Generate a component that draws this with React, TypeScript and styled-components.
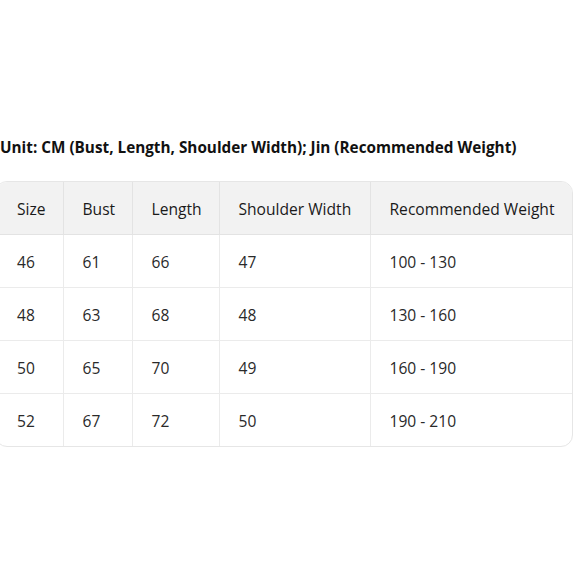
import { FC } from "react";
import styled, { createGlobalStyle } from "styled-components";

const Global = createGlobalStyle`
    html, body {
        margin: 0;
        padding: 0;
        background: #ffffff;
        font-family: "Open Sans", "Noto Sans", "Liberation Sans", sans-serif;
        overflow: hidden;
    }
`

const columns = [
    { title: "Size", width: 67 },
    { title: "Bust", width: 69 },
    { title: "Length", width: 87 },
    { title: "Shoulder Width", width: 151 },
    { title: "Recommended Weight", width: 203 },
]

const rows = [
    ["46", "61", "66", "47", "100 - 130"],
    ["48", "63", "68", "48", "130 - 160"],
    ["50", "65", "70", "49", "160 - 190"],
    ["52", "67", "72", "50", "190 - 210"],
]

const App: FC = () => {
    return <Page>
        <Global />
        <Title>Unit: CM (Bust, Length, Shoulder Width); Jin (Recommended Weight)</Title>
        <TableBox>
            <Table>
                <colgroup>
                    {columns.map(c => <col key={c.title} style={{ width: c.width }} />)}
                </colgroup>
                <thead>
                    <tr>
                        {columns.map(c => <Th key={c.title}>{c.title}</Th>)}
                    </tr>
                </thead>
                <tbody>
                    {rows.map((r, i) => <tr key={i}>
                        {r.map((v, j) => <Td key={j} last={i === rows.length - 1}>{v}</Td>)}
                    </tr>)}
                </tbody>
            </Table>
        </TableBox>
    </Page>
}

export default App

const Page = styled.div`
    width: 581px;
    height: 581px;
    padding-top: 136px;
    box-sizing: border-box;
`

const Title = styled.div`
    font-size: 15.3px;
    font-weight: 700;
    line-height: 22px;
    color: #111;
    margin: 0 0 23px 0;
    white-space: nowrap;
`

const TableBox = styled.div`
    width: 578px;
    margin-left: -5px;
    border: 1px solid #e6e6e6;
    border-radius: 12px;
    overflow: hidden;
    box-sizing: border-box;
`

const Table = styled.table`
    width: 100%;
    border-collapse: collapse;
    table-layout: fixed;
    font-size: 15.6px;
`

const Th = styled.th`
    height: 51px;
    padding: 1px 0 0 19px;
    text-align: left;
    font-weight: 400;
    color: #1a1a1a;
    background: #f2f2f2;
    border-left: 1px solid #e3e3e3;
    border-bottom: 1px solid #e3e3e3;
    white-space: nowrap;
    &:first-child { border-left: none; padding-left: 21px; }
`

const Td = styled.td<{ last: boolean }>`
    height: 51px;
    padding: 1px 0 0 19px;
    text-align: left;
    color: #2a2a2a;
    border-left: 1px solid #ebebeb;
    border-bottom: ${p => p.last ? "none" : "1px solid #ebebeb"};
    &:first-child { border-left: none; padding-left: 21px; }
`
